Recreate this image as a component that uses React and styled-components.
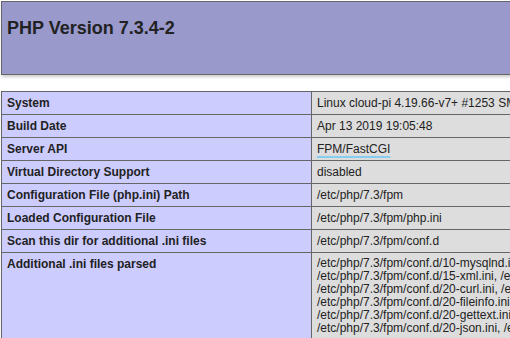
import React from 'react';
import styled, { createGlobalStyle } from 'styled-components';

const GlobalStyle = createGlobalStyle`
    html, body {
        margin: 0;
        padding: 0;
        background: #fff;
        overflow: hidden;
    }
    body {
        color: #222;
        font-family: "Liberation Sans", Arial, sans-serif;
    }
`;

const rows = [
    { key: 'System', value: 'Linux cloud-pi 4.19.66-v7+ #1253 SMP Thu Aug 15 11:49:46 BST 2019 armv7l' },
    { key: 'Build Date', value: 'Apr 13 2019 19:05:48' },
    { key: 'Server API', value: 'FPM/FastCGI', marked: true },
    { key: 'Virtual Directory Support', value: 'disabled' },
    { key: 'Configuration File (php.ini) Path', value: '/etc/php/7.3/fpm' },
    { key: 'Loaded Configuration File', value: '/etc/php/7.3/fpm/php.ini' },
    { key: 'Scan this dir for additional .ini files', value: '/etc/php/7.3/fpm/conf.d' },
];

const parsedFiles = [
    '/etc/php/7.3/fpm/conf.d/10-mysqlnd.ini, /etc/php/7.3/fpm/conf.d/10-opcache.ini,',
    '/etc/php/7.3/fpm/conf.d/15-xml.ini, /etc/php/7.3/fpm/conf.d/20-calendar.ini,',
    '/etc/php/7.3/fpm/conf.d/20-curl.ini, /etc/php/7.3/fpm/conf.d/20-exif.ini,',
    '/etc/php/7.3/fpm/conf.d/20-fileinfo.ini, /etc/php/7.3/fpm/conf.d/20-ftp.ini,',
    '/etc/php/7.3/fpm/conf.d/20-gettext.ini, /etc/php/7.3/fpm/conf.d/20-iconv.ini,',
    '/etc/php/7.3/fpm/conf.d/20-json.ini, /etc/php/7.3/fpm/conf.d/20-mysqli.ini,',
];

const App = () => {
    return (
        <Page>
            <GlobalStyle />
            <Header>
                <Title>PHP Version 7.3.4-2</Title>
            </Header>

            <InfoTable>
                {rows.map(row => (
                    <Row key={row.key}>
                        <KeyCell>{row.key}</KeyCell>
                        <ValueCell>
                            {row.marked ? <Marked>{row.value}</Marked> : row.value}
                        </ValueCell>
                    </Row>
                ))}
                <Row>
                    <KeyCell>Additional .ini files parsed</KeyCell>
                    <ValueCell tight>
                        {parsedFiles.map(line => (
                            <Line key={line}>{line}</Line>
                        ))}
                    </ValueCell>
                </Row>
            </InfoTable>
        </Page>
    );
}

const Page = styled.div`
    padding: 1px 0 0 1px;
    width: 900px;
    height: 337px;
    overflow: hidden;
`;

const Header = styled.div`
    box-sizing: border-box;
    width: 860px;
    height: 74px;
    padding: 16px 5px 0;
    border: 1px solid #666;
    background-color: #99c;
    box-shadow: 1px 2px 3px #ccc;
`;

const Title = styled.h1`
    margin: 0;
    font-size: 18px;
    line-height: 21px;
    font-weight: bold;
    color: #222;
`;

const InfoTable = styled.div`
    margin-top: 16px;
    width: 860px;
    border-top: 1px solid #666;
    border-left: 1px solid #666;
    box-shadow: 1px 2px 3px #ccc;
`;

const Row = styled.div`
    display: grid;
    grid-template-columns: 310px 1fr;
`;

const Cell = styled.div`
    box-sizing: border-box;
    padding: 4px 5px;
    border-right: 1px solid #666;
    border-bottom: 1px solid #666;
    font-size: 12px;
    line-height: 14px;
    white-space: nowrap;
    overflow: hidden;
`;

const KeyCell = styled(Cell)`
    background-color: #ccf;
    font-weight: bold;
`;

const ValueCell = styled(Cell)`
    background-color: #ddd;
    line-height: ${prop => prop.tight ? '13px' : '14px'};
`;

const Line = styled.div`
    white-space: nowrap;
`;

const Marked = styled.span`
    text-decoration: underline;
    text-decoration-color: #86cdef;
    text-decoration-thickness: 2px;
    text-underline-offset: 3px;
`;

export default App;
